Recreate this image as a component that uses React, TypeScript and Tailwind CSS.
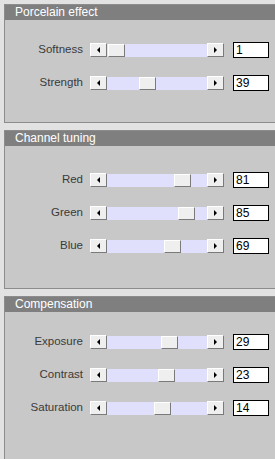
import React from "react";

type Row = { label: string; value: number; min: number; max: number };

type Section = { title: string; padTop: string; height: string; rows: Row[] };

const sections: Section[] = [
  {
    title: "Porcelain effect",
    padTop: "pt-[22px]",
    height: "h-[102px]",
    rows: [
      { label: "Softness", value: 1, min: 0, max: 100 },
      { label: "Strength", value: 39, min: 0, max: 100 },
    ],
  },
  {
    title: "Channel tuning",
    padTop: "pt-[26px]",
    height: "h-[142px]",
    rows: [
      { label: "Red", value: 81, min: 0, max: 100 },
      { label: "Green", value: 85, min: 0, max: 100 },
      { label: "Blue", value: 69, min: 0, max: 100 },
    ],
  },
  {
    title: "Compensation",
    padTop: "pt-[22px]",
    height: "h-[170px]",
    rows: [
      { label: "Exposure", value: 29, min: -100, max: 100 },
      { label: "Contrast", value: 23, min: -100, max: 100 },
      { label: "Saturation", value: 14, min: -100, max: 100 },
    ],
  },
];

const bevel =
  "border border-t-white border-l-white border-b-[#7a7a7a] border-r-[#7a7a7a] bg-[#efefef]";

function Arrow({ dir }: { dir: "left" | "right" }) {
  return (
    <div className={`w-[17px] h-[14px] flex items-center justify-center ${bevel}`}>
      <svg width="4" height="6" viewBox="0 0 4 6">
        {dir === "left" ? (
          <path d="M3 0 L0 3 L3 6 Z" fill="#000" />
        ) : (
          <path d="M0 0 L3 3 L0 6 Z" fill="#000" />
        )}
      </svg>
    </div>
  );
}

function Slider({ value, min, max }: { value: number; min: number; max: number }) {
  const travel = 100 - 17;
  const left = Math.round(((value - min) / (max - min)) * travel);
  return (
    <div className="flex items-center w-[134px]">
      <Arrow dir="left" />
      <div className="relative w-[100px] h-[13px] bg-[#e0e0fc]">
        <div className={`absolute top-0 w-[17px] h-[13px] ${bevel}`} style={{ left }} />
      </div>
      <Arrow dir="right" />
    </div>
  );
}

function Panel({ section }: { section: Section }) {
  return (
    <div className="w-[290px] border border-[#8c8c8c] border-r-0">
      <div className="h-[15px] bg-[#7f7f7f] text-white text-[12px] leading-[15px] pl-[10px]">
        {section.title}
      </div>
      <div className={`${section.height} ${section.padTop} bg-[#c8c8c8] flex flex-col gap-[17px]`}>
        {section.rows.map((r) => (
          <div key={r.label} className="flex items-center h-[16px]">
            <span className="w-[78px] text-right text-[11.5px] text-[#3a3a3a]">{r.label}</span>
            <div className="ml-[7px]">
              <Slider value={r.value} min={r.min} max={r.max} />
            </div>
            <div className="ml-[9px] w-[36px] h-[16px] bg-white border border-black text-[12px] leading-[14px] pl-[2px] text-black">
              {r.value}
            </div>
          </div>
        ))}
      </div>
    </div>
  );
}

export default function App() {
  return (
    <div
      className="w-[275px] h-[459px] overflow-hidden bg-[#e2e2e2] pl-[4px] pt-[4px] flex flex-col gap-[7px]"
      style={{ fontFamily: '"Liberation Sans", Arial, sans-serif' }}
    >
      {sections.map((s) => (
        <Panel key={s.title} section={s} />
      ))}
    </div>
  );
}
